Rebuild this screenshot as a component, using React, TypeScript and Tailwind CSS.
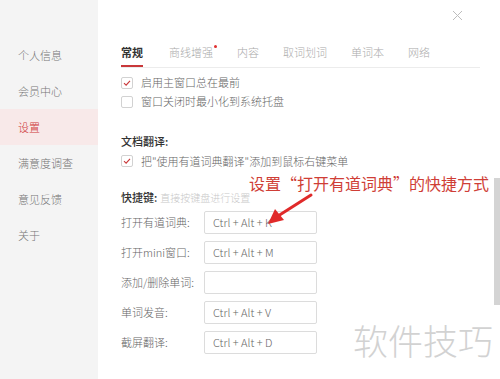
const FONT = { fontFamily: '"Noto Sans CJK SC", "Noto Sans", sans-serif' };

const MENU = ['个人信息', '会员中心', '设置', '满意度调查', '意见反馈', '关于'];
const TABS = ['常规', '商线增强', '内容', '取词划词', '单词本', '网络'];
const KEYS: [string, string][] = [
  ['打开有道词典:', 'Ctrl + Alt + K'],
  ['打开mini窗口:', 'Ctrl + Alt + M'],
  ['添加/删除单词:', ''],
  ['单词发音:', 'Ctrl + Alt + V'],
  ['截屏翻译:', 'Ctrl + Alt + D'],
];

function Check({ on, label }: { on: boolean; label: string }) {
  return (
    <label className="flex items-center gap-[8px] h-[19px] text-[11px] text-[#666] font-light">
      <span className="w-[12px] h-[12px] border border-[#d2d2d2] rounded-[2px] bg-white flex items-center justify-center">
        {on && (
          <svg width="8" height="8" viewBox="0 0 8 8">
            <path d="M1 4.2 L3.1 6.2 L7 1.8" fill="none" stroke="#c9383a" strokeWidth="1.1" />
          </svg>
        )}
      </span>
      {label}
    </label>
  );
}

export default function App() {
  return (
    <div className="relative w-[500px] h-[379px] overflow-hidden bg-white flex" style={FONT}>
      <aside className="w-[98px] bg-[#f4f4f4] pt-[37px]">
        {MENU.map((m) => (
          <div
            key={m}
            className={`h-9 flex items-center pl-[18px] text-[11px] font-light ${
              m === '设置' ? 'bg-[#f8e9e9] text-[#cf3a3a]' : 'text-[#777]'
            }`}
          >
            {m}
          </div>
        ))}
      </aside>

      <main className="flex-1 pl-[23px] pt-[44px]">
        <div className="flex w-[359px] border-b border-[#ececec]">
          {TABS.map((t, i) => (
            <div
              key={t}
              className={`relative h-[23px] leading-4 text-[11px] ${i === 0 ? 'mr-[26px]' : 'mr-[24px]'} ${
                i === 0 ? 'border-b-2 border-[#c9383a] text-[#333] font-bold -mb-px' : 'text-[#aaa] font-light'
              }`}
            >
              {t}
              {i === 1 && <span className="absolute -right-[4px] top-[1px] w-[3px] h-[3px] rounded-full bg-[#e03030]" />}
            </div>
          ))}
        </div>

        <div className="mt-[5px]">
          <Check on label="启用主窗口总在最前" />
          <Check on={false} label="窗口关闭时最小化到系统托盘" />
        </div>

        <div className="mt-[20px] h-[20px] flex items-center text-[11px] font-medium text-[#333]">文档翻译:</div>
        <div className="h-[20px] flex items-center">
          <Check on label={'把"使用有道词典翻译"添加到鼠标右键菜单'} />
        </div>

        <div className="mt-[16px] h-[20px] flex items-center gap-[3px]">
          <span className="text-[11px] font-medium text-[#333]">快捷键:</span>
          <span className="text-[10px] font-light text-[#c8c8c8]">直接按键盘进行设置</span>
        </div>

        <div>
          {KEYS.map(([k, v]) => (
            <div key={k} className="h-[30px] flex items-center">
              <span className="w-[83px] text-[11px] font-light text-[#666]">{k}</span>
              <div className="w-[113px] h-[23px] border border-[#dcdcdc] rounded-[2px] flex items-center pl-[8px] text-[11px] font-light text-[#666]">
                {v}
              </div>
            </div>
          ))}
        </div>
      </main>

      <svg className="absolute left-[452px] top-[10px]" width="11" height="11" viewBox="0 0 11 11">
        <path d="M1 1 L10 10 M10 1 L1 10" stroke="#bdbdbd" strokeWidth="1" />
      </svg>

      <div className="absolute left-[249px] top-[172px] text-[16px] leading-[22px] text-[#cf3e36] whitespace-nowrap">
        设置“打开有道词典”的快捷方式
      </div>
      <svg className="absolute left-[262px] top-[192px]" width="54" height="36" viewBox="0 0 54 36">
        <path d="M49 3 L16 24" stroke="#e02a2a" strokeWidth="3" strokeLinecap="round" />
        <path d="M6 32 L13 17 L22 28 Z" fill="#e02a2a" />
      </svg>

      <div className="absolute left-[494px] top-[178px] w-[6px] h-[127px] bg-[#d4d4d4]" />

      <div className="absolute left-[353px] top-[318px] text-[35px] leading-[44px] font-light text-[#d2d2d2] whitespace-nowrap">
        软件技巧
      </div>
    </div>
  );
}
